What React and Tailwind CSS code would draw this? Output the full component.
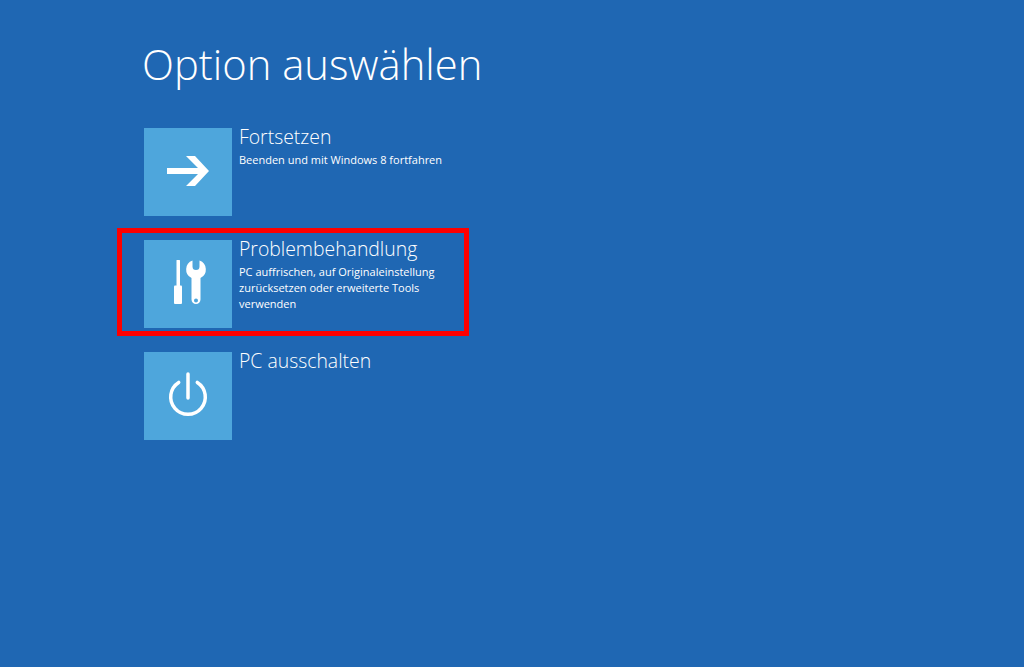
const font = { fontFamily: '"Open Sans", "Noto Sans", sans-serif' };

function Arrow() {
  return (
    <svg width="88" height="88" viewBox="0 0 88 88" fill="#fff">
      <path d="M23 40H54L42 28H51L65 43L51 58H42L54 46H23Z" />
    </svg>
  );
}

function Tools() {
  return (
    <svg width="88" height="88" viewBox="0 0 88 88" fill="#fff">
      <rect x="32.500" y="20" width="3.500" height="26" rx="0.500" />
      <rect x="30" y="45.500" width="8" height="18.500" rx="1" />
      <path
        fillRule="evenodd"
        d="M48.500 20.500V26.500A3.500 3.500 0 0 0 55.500 26.500V20.500A9.500 9.500 0 0 1 56.500 38V59.500A4.500 4.500 0 0 1 47.500 59.500V38A9.500 9.500 0 0 1 48.500 20.500ZM52 58.500A2 2 0 1 0 52 62.500A2 2 0 1 0 52 58.500Z"
      />
    </svg>
  );
}

function Power() {
  return (
    <svg width="88" height="88" viewBox="0 0 88 88" fill="none" stroke="#fff" strokeWidth="3.500" strokeLinecap="round">
      <path d="M44 22V46" />
      <path d="M34.700 30.400A17.300 17.300 0 1 0 53.300 30.400" />
    </svg>
  );
}

function Option({ icon, title, lines }) {
  return (
    <div className="flex h-[88px] items-start">
      <div className="h-[88px] w-[88px] shrink-0 bg-[#4ea6dc]">{icon}</div>
      <div className="ml-[7px] text-white">
        <div className="mt-[-5px] text-[19.400px] leading-[28px] font-light">{title}</div>
        <div className="mt-[1px] w-[230px] text-[11px] leading-[16px]">
          {lines.map((l) => (
            <div key={l} className="whitespace-nowrap">{l}</div>
          ))}
        </div>
      </div>
    </div>
  );
}

export default function App() {
  return (
    <div className="relative h-[667px] w-full overflow-hidden bg-[#1f67b3] pl-[144px]" style={font}>
      <h1 className="ml-[-2px] pt-[35px] text-[41.750px] leading-[58px] font-light text-white">Option auswählen</h1>
      <div className="mt-[35px] flex flex-col gap-6">
        <Option icon={<Arrow />} title="Fortsetzen" lines={["Beenden und mit Windows 8 fortfahren"]} />
        <Option
          icon={<Tools />}
          title="Problembehandlung"
          lines={["PC auffrischen, auf Originaleinstellung", "zurücksetzen oder erweiterte Tools", "verwenden"]}
        />
        <Option icon={<Power />} title="PC ausschalten" lines={[]} />
      </div>
      <div className="absolute top-[228px] left-[117px] h-[108px] w-[352px] border-[5px] border-[#ff0000]" />
    </div>
  );
}
